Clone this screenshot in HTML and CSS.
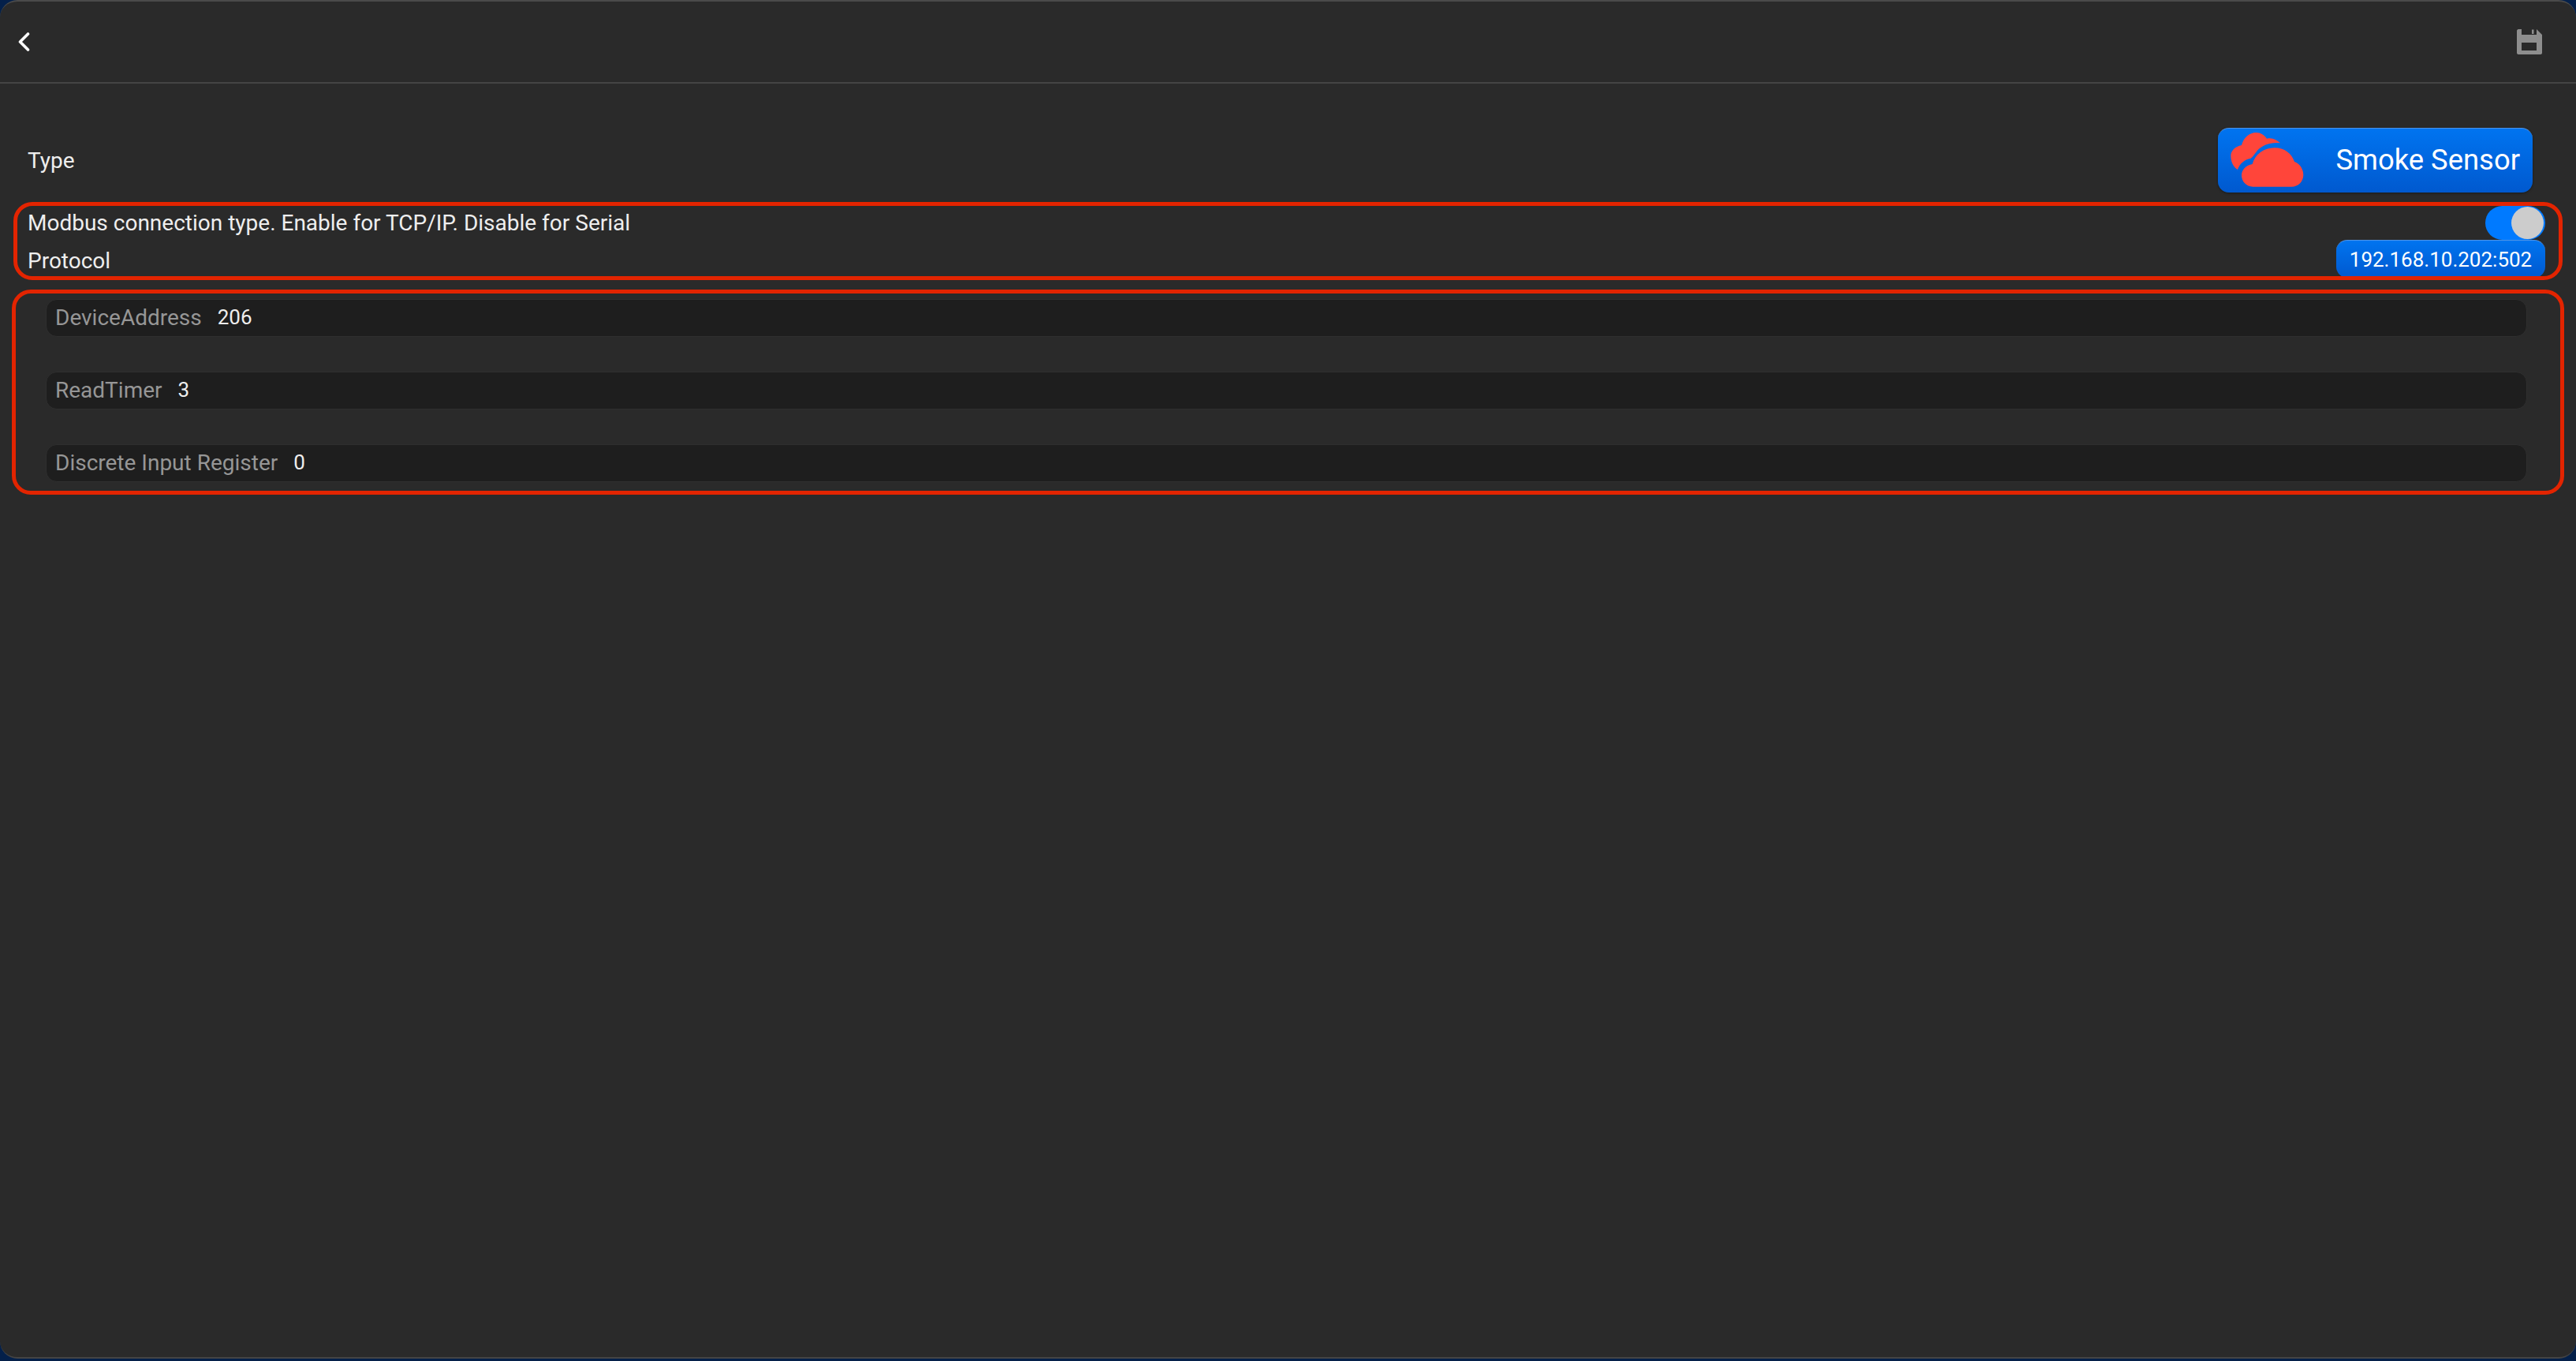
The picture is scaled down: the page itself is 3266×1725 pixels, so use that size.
FILE: index.html
```html
<!DOCTYPE html>
<html lang="en">

<head>
    <meta charset="UTF-8">
    <meta name="viewport" content="width=device-width, initial-scale=1.0">
    <title>Smoke Sensor</title>
    <link rel="stylesheet" href="styles.css">
</head>

<body>
    <div class="app">
        <div class="header">
            <svg class="back-icon" viewBox="0 0 16 24">
                <path d="M13.5 2 3.5 12 13.5 22" fill="none" stroke="#fff" stroke-width="3.6" stroke-linecap="round" stroke-linejoin="round" />
            </svg>
            <svg class="save-icon" viewBox="0 0 32 32">
                <path fill-rule="evenodd" fill="#8e8e8e" d="M2 0H6V7H25V0L32 7V30C32 31 31 32 30 32H2C1 32 0 31 0 30V2C0 1 1 0 2 0ZM6 17V27H25V17Z" />
                <rect x="19" y="0.5" width="2.5" height="5.5" fill="#8e8e8e" />
            </svg>
        </div>

        <div class="type-row">
            <span class="label">Type</span>
            <div class="type-button">
                <svg class="cloud-icon" viewBox="84 52 277 207">
                    <path fill="#ff453a" d="M110 193C95 185 84 165 84 140C84 122 100 105 125 100C132 72 155 52 180 52C198 52 212 62 221 75C240 70 258 78 272 92C235 88 205 100 185 120C175 132 170 142 160 150C135 155 118 170 110 193Z" />
                    <path fill="#ff453a" d="M168 258C143 258 125 238 125 215C125 193 142 176 166 172C176 135 210 110 250 110C288 110 316 132 326 163C346 170 360 190 360 213C360 238 340 258 315 258Z" />
                </svg>
                <span>Smoke Sensor</span>
            </div>
        </div>

        <div class="group group-connection">
            <div class="setting-row">
                <span class="label">Modbus connection type. Enable for TCP/IP. Disable for Serial</span>
                <div class="toggle"><div class="knob"></div></div>
            </div>
            <div class="setting-row">
                <span class="label protocol-label">Protocol</span>
                <div class="ip-button">192.168.10.202:502</div>
            </div>
        </div>

        <div class="group group-fields">
            <div class="field"><span class="field-name">DeviceAddress</span><span class="field-value">206</span></div>
            <div class="field"><span class="field-name">ReadTimer</span><span class="field-value">3</span></div>
            <div class="field"><span class="field-name">Discrete Input Register</span><span class="field-value">0</span></div>
        </div>
    </div>
</body>

</html>
```

FILE: styles.css
```css
html,
body {
    margin: 0;
    height: 100%;
}

body {
    background-color: #04204a;
    font-family: Roboto, sans-serif;
    font-size: 28px;
    color: #eee;
    overflow: hidden;
}

.app {
    height: 1722px;
    box-sizing: border-box;
    background-color: #2a2a2a;
    border-top: 2px solid #4a4a4a;
    border-bottom: 2px solid #444;
    border-radius: 22px;
}

.header {
    height: 102px;
    border-bottom: 2px solid #444;
    display: flex;
    justify-content: space-between;
    align-items: center;
    padding: 0 43px 0 22px;
}

.back-icon {
    width: 16px;
    height: 24px;
}

.save-icon {
    width: 32px;
    height: 32px;
}

.type-row {
    display: flex;
    justify-content: space-between;
    align-items: center;
    margin-top: 56px;
    padding: 0 55px 0 35px;
}

.type-button {
    width: 399px;
    height: 82px;
    box-sizing: border-box;
    padding: 0 16px 2px;
    display: flex;
    justify-content: space-between;
    align-items: center;
    border-top: 1px solid #4f94e8;
    border-radius: 14px;
    background: linear-gradient(#0074f0, #0059cf);
    box-shadow: 0 1px 3px rgba(0, 0, 0, 0.4);
    color: #fff;
    font-size: 36.4px;
}

.cloud-icon {
    width: 93px;
    height: 69px;
}

.group {
    position: relative;
}

/* red annotation frames sit above the controls */
.group::after {
    content: "";
    position: absolute;
    inset: 0;
    border: 5px solid #e32400;
    border-radius: 24px;
    pointer-events: none;
}

.group-connection {
    height: 99px;
    box-sizing: border-box;
    margin: 12px 17px 0;
    padding: 5px 22px 0 18px;
}

.setting-row {
    display: flex;
    justify-content: space-between;
    align-items: center;
}

.protocol-label {
    margin-top: 4px;
}

.toggle {
    width: 76px;
    height: 43px;
    box-sizing: border-box;
    padding: 1px 2px;
    display: flex;
    justify-content: flex-end;
    border-radius: 22px;
    background-color: #007aff;
}

.knob {
    width: 41px;
    height: 41px;
    border-radius: 50%;
    background-color: #ccc;
}

.ip-button {
    width: 265px;
    height: 48px;
    box-sizing: border-box;
    display: flex;
    justify-content: center;
    align-items: center;
    border-top: 1px solid #4f94e8;
    border-radius: 14px;
    background: linear-gradient(#0074f0, #0059cf);
    color: #fff;
    font-size: 26px;
}

.group-fields {
    height: 260px;
    box-sizing: border-box;
    margin: 12px 15px 0;
    padding: 12px 47px 0 43px;
    display: flex;
    flex-direction: column;
    gap: 44px;
}

.field {
    height: 48px;
    box-sizing: border-box;
    padding: 0 11px 2px;
    display: flex;
    align-items: center;
    gap: 20px;
    background-color: #1e1e1e;
    border: 1px solid #2f2f2f;
    border-radius: 14px;
}

.field-name {
    color: #969696;
}

.field-value {
    font-size: 26px;
}
```
